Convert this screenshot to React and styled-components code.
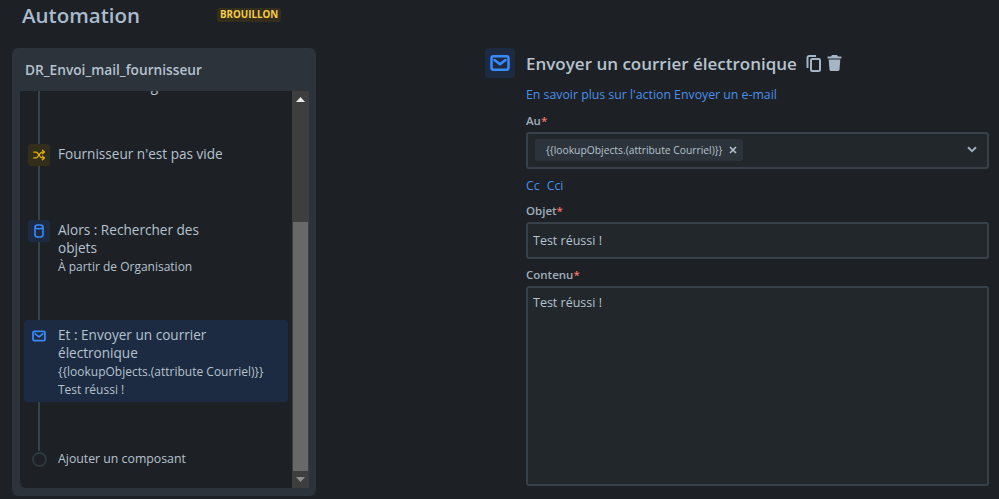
import styled, { createGlobalStyle } from "styled-components";

const GlobalStyle = createGlobalStyle`
  html, body {
    margin: 0;
    height: 100%;
    background: #1d2125;
  }
  * {
    box-sizing: border-box;
  }
`;

const Page = styled.div`
  width: 999px;
  height: 499px;
  overflow: hidden;
  display: flex;
  flex-direction: column;
  padding: 0 10px 3px 12px;
  background: #1d2125;
  color: #b6c2cf;
  font-family: "Open Sans", "Noto Sans", sans-serif;
`;

const Header = styled.header`
  height: 48px;
  flex: none;
  display: flex;
  align-items: flex-start;
  padding-left: 10px;
`;

const PageTitle = styled.h1`
  width: 195px;
  margin: 0;
  font-size: 20.5px;
  line-height: 30px;
  font-weight: 600;
  color: #a9bccf;
`;

const Badge = styled.span`
  margin-top: 8px;
  height: 14px;
  padding: 0 3px;
  border-radius: 3px;
  background: #332e1b;
  color: #f5cd47;
  font-size: 9.8px;
  line-height: 14px;
  font-weight: 700;
`;

const Columns = styled.div`
  flex: 1;
  min-height: 0;
  display: flex;
`;

const Panel = styled.section`
  width: 304px;
  flex: none;
  height: 448px;
  display: flex;
  flex-direction: column;
  padding: 0 7px 8px 8px;
  background: #2c333a;
  border-radius: 6px;
`;

const PanelTitle = styled.h2`
  height: 43px;
  flex: none;
  margin: 0;
  padding-left: 5px;
  font-size: 13.7px;
  line-height: 44px;
  font-weight: 600;
  color: #b6c2cf;
`;

const Viewport = styled.div`
  flex: 1;
  min-height: 0;
  display: flex;
  overflow: hidden;
  background: #1d2125;
  border-radius: 0 0 0 6px;
`;

const Flow = styled.ol`
  position: relative;
  flex: 1;
  margin: 0;
  padding: 0 4px;
  list-style: none;
  overflow: hidden;

  &::before {
    content: "";
    position: absolute;
    top: 0;
    left: 18px;
    width: 2px;
    height: 360px;
    background: #38424a;
  }
`;

const Step = styled.li`
  position: relative;
  display: flex;
  gap: 8px;
  margin-top: ${(p) => p.$top}px;
  padding: ${(p) => (p.$active ? "5px 0 3px 4px" : "0 0 0 4px")};
  min-height: ${(p) => (p.$active ? "81px" : "0")};
  background: ${(p) => (p.$active ? "#1c2b41" : "transparent")};
  border-radius: 3px;
`;

const StepIcon = styled.span`
  width: 22px;
  height: 22px;
  flex: none;
  display: flex;
  align-items: center;
  justify-content: center;
  border-radius: 3px;
  background: ${(p) => p.$bg || "transparent"};
  color: ${(p) => p.$color};
`;

const StepDot = styled.span`
  width: 22px;
  height: 22px;
  flex: none;
  display: flex;
  align-items: center;
  justify-content: center;

  &::after {
    content: "";
    width: 11px;
    height: 11px;
    border: 2px solid #2f383f;
    border-radius: 50%;
    background: #1d2125;
  }
`;

const StepSpacer = styled.span`
  width: 22px;
  flex: none;
`;

const StepText = styled.div`
  width: ${(p) => (p.$wide ? "215px" : "180px")};
`;

const StepName = styled.div`
  font-size: 13.6px;
  line-height: 18px;
  padding: 1px 0;
  color: #b6c2cf;
`;

const StepNote = styled.div`
  font-size: 12px;
  line-height: 18px;
  color: #b6c2cf;
`;

const AddLabel = styled.div`
  font-size: 12.3px;
  line-height: 22px;
  color: #b6c2cf;
`;

const Scrollbar = styled.div`
  width: 17px;
  flex: none;
  display: flex;
  flex-direction: column;
  align-items: center;
  background: #3e3e3e;
`;

const ScrollArrow = styled.div`
  height: 17px;
  flex: none;
  display: flex;
  align-items: center;
  justify-content: center;
  color: ${(p) => p.$color};
`;

const ScrollThumb = styled.div`
  width: 15px;
  height: 249px;
  flex: none;
  margin-top: 114px;
  background: #686868;
`;

const Editor = styled.section`
  flex: 1;
  min-width: 0;
  margin-left: 169px;
  display: flex;
  gap: 11px;
`;

const ActionIcon = styled.span`
  width: 30px;
  height: 30px;
  flex: none;
  display: flex;
  align-items: center;
  justify-content: center;
  border-radius: 3px;
  background: #1c2b41;
  color: #388bff;
`;

const EditorBody = styled.div`
  flex: 1;
  min-width: 0;
  display: flex;
  flex-direction: column;
`;

const TitleRow = styled.div`
  height: 30px;
  flex: none;
  display: flex;
  align-items: center;
  gap: 9px;
`;

const ActionTitle = styled.h2`
  margin: 0;
  font-size: 17px;
  line-height: 31px;
  font-weight: 600;
  color: #b6c2cf;
`;

const IconGroup = styled.div`
  display: flex;
  align-items: center;
  gap: 6px;
  color: #a6b5c5;
`;

const Link = styled.a`
  color: #4c8eeb;
  font-size: 12.3px;
  line-height: 18px;
  text-decoration: none;
`;

const LearnLink = styled(Link)`
  margin-top: 8px;
`;

const FieldLabel = styled.label`
  margin-top: ${(p) => p.$top}px;
  display: block;
  height: 16px;
  font-size: 11.5px;
  line-height: 16px;
  font-weight: 600;
  color: #9fadbc;
`;

const Required = styled.span`
  color: #f87168;
`;

const Field = styled.div`
  flex: none;
  display: flex;
  align-items: ${(p) => (p.$multi ? "flex-start" : "center")};
  height: ${(p) => p.$height}px;
  margin-top: 3px;
  padding: ${(p) => (p.$multi ? "4px 5px" : "0 5px")};
  background: #22272b;
  border: 2px solid #38414a;
  border-radius: 3px;
  font-size: 12.5px;
  line-height: 22px;
  color: #b6c2cf;
`;

const SelectField = styled(Field)`
  justify-content: space-between;
  padding: 0 10px 2px 7px;
`;

const Chip = styled.span`
  height: 22px;
  width: 208px;
  display: flex;
  align-items: center;
  justify-content: space-between;
  padding: 0 6px 0 11px;
  background: #2c333a;
  border-radius: 3px;
  font-size: 10.3px;
  white-space: nowrap;
  color: #b6c2cf;
`;

const ChipClose = styled.svg`
  width: 8px;
  height: 8px;
  flex: none;
`;

const CopyLinks = styled.div`
  margin-top: 8px;
  display: flex;
  gap: 7px;
  height: 18px;
`;

const ShuffleIcon = () => (
  <svg width="14" height="14" viewBox="0 0 24 24" fill="none" stroke="currentColor" strokeWidth="2.4" strokeLinecap="round" strokeLinejoin="round">
    <path d="M3 7h4c4 0 6 10 10 10h4" />
    <path d="M3 17h4c4 0 6-10 10-10h4" />
    <path d="M18 4l3 3-3 3" />
    <path d="M18 14l3 3-3 3" />
  </svg>
);

const CylinderIcon = () => (
  <svg width="14" height="14" viewBox="0 0 14 14" fill="none" stroke="currentColor" strokeWidth="1.6">
    <rect x="3" y="1" width="8" height="12" rx="2.5" />
    <path d="M3 3.8c1 1.2 7 1.2 8 0" />
  </svg>
);

const MailIcon = ({ size, weight }) => (
  <svg width={size} height={size} viewBox="0 0 16 16" fill="none" stroke="currentColor" strokeWidth={weight} strokeLinejoin="round" strokeLinecap="round">
    <rect x="1.2" y="2.6" width="13.6" height="10.8" rx="1.6" />
    <path d="M3.6 5.6L8 9l4.4-3.4" />
  </svg>
);

const CopyIcon = () => (
  <svg width="15" height="17" viewBox="0 0 15 17" fill="none" stroke="currentColor" strokeWidth="2">
    <path d="M1.5 13V2.5C1.5 1.7 2.1 1 2.9 1H10" />
    <rect x="5" y="4" width="9" height="12" rx="1.2" />
  </svg>
);

const TrashIcon = () => (
  <svg width="15" height="16" viewBox="0 0 15 16" fill="currentColor">
    <path d="M5 0h5l1 1.5h3.4v2H.6v-2H4z" />
    <path d="M1.7 4.6h11.6l-.8 10c-.1.8-.6 1.4-1.4 1.4H3.9c-.8 0-1.3-.6-1.4-1.4z" />
  </svg>
);

const Chevron = () => (
  <svg width="10" height="7" viewBox="0 0 10 7" fill="none" stroke="#9fadbc" strokeWidth="2">
    <path d="M1 1.2l4 4 4-4" />
  </svg>
);

function App() {
  return (
    <Page>
      <GlobalStyle />
      <Header>
        <PageTitle>Automation</PageTitle>
        <Badge>BROUILLON</Badge>
      </Header>
      <Columns>
        <Panel>
          <PanelTitle>DR_Envoi_mail_fournisseur</PanelTitle>
          <Viewport>
            <Flow>
              <Step $top={-15}>
                <StepSpacer />
                <StepText><StepName>Éléments changés</StepName></StepText>
              </Step>
              <Step $top={48}>
                <StepIcon $bg="#332e1b" $color="#e2b203"><ShuffleIcon /></StepIcon>
                <StepText><StepName>Fournisseur n'est pas vide</StepName></StepText>
              </Step>
              <Step $top={54}>
                <StepIcon $bg="#1c2b41" $color="#388bff"><CylinderIcon /></StepIcon>
                <StepText>
                  <StepName>Alors : Rechercher des objets</StepName>
                  <StepNote>À partir de Organisation</StepNote>
                </StepText>
              </Step>
              <Step $top={44} $active>
                <StepIcon $color="#388bff"><MailIcon size={14} weight={2} /></StepIcon>
                <StepText $wide>
                  <StepName>Et : Envoyer un courrier électronique</StepName>
                  <StepNote>{"{{lookupObjects.(attribute Courriel)}}"}</StepNote>
                  <StepNote>Test réussi !</StepNote>
                </StepText>
              </Step>
              <Step $top={46}>
                <StepDot />
                <AddLabel>Ajouter un composant</AddLabel>
              </Step>
            </Flow>
            <Scrollbar>
              <ScrollArrow $color="#e8e8e8">
                <svg width="9" height="5" viewBox="0 0 9 5" fill="currentColor"><path d="M4.5 0L9 5H0z" /></svg>
              </ScrollArrow>
              <ScrollThumb />
              <ScrollArrow $color="#8e8e8e">
                <svg width="9" height="5" viewBox="0 0 9 5" fill="currentColor"><path d="M0 0h9L4.5 5z" /></svg>
              </ScrollArrow>
            </Scrollbar>
          </Viewport>
        </Panel>
        <Editor>
          <ActionIcon><MailIcon size={20} weight={2} /></ActionIcon>
          <EditorBody>
            <TitleRow>
              <ActionTitle>Envoyer un courrier électronique</ActionTitle>
              <IconGroup>
                <CopyIcon />
                <TrashIcon />
              </IconGroup>
            </TitleRow>
            <LearnLink href="#">En savoir plus sur l'action Envoyer un e-mail</LearnLink>
            <FieldLabel $top={9}>Au<Required>*</Required></FieldLabel>
            <SelectField $height={37}>
              <Chip>
                {"{{lookupObjects.(attribute Courriel)}}"}
                <ChipClose viewBox="0 0 8 8" stroke="#b6c2cf" strokeWidth="1.6">
                  <path d="M1 1l6 6M7 1l-6 6" />
                </ChipClose>
              </Chip>
              <Chevron />
            </SelectField>
            <CopyLinks>
              <Link href="#">Cc</Link>
              <Link href="#">Cci</Link>
            </CopyLinks>
            <FieldLabel $top={8}>Objet<Required>*</Required></FieldLabel>
            <Field $height={37}>Test réussi !</Field>
            <FieldLabel $top={8}>Contenu<Required>*</Required></FieldLabel>
            <Field $multi $height={200}>Test réussi !</Field>
          </EditorBody>
        </Editor>
      </Columns>
    </Page>
  );
}

export default App;
